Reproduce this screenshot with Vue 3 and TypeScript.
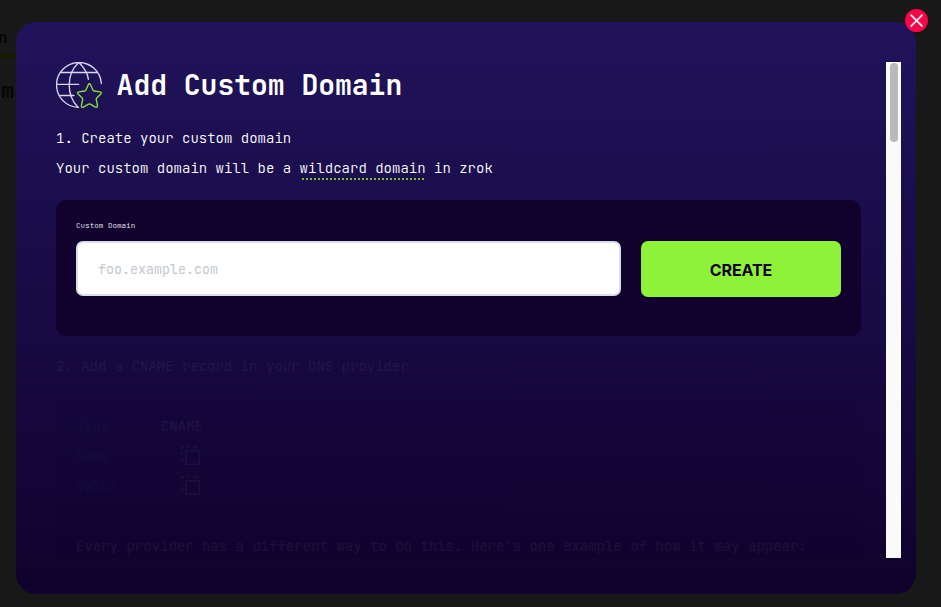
<script setup lang="ts">
interface RecordRow {
  label: string
  value?: string
}

const records: RecordRow[] = [
  { label: 'Type', value: 'CNAME' },
  { label: 'Name' },
  { label: 'Value' },
]
</script>

<template>
  <div class="page">
    <div class="backdrop" aria-hidden="true">
      <div class="tab">n</div>
      <div class="title">ma</div>
    </div>

    <section class="modal">
      <button class="close" aria-label="Close">
        <svg width="23" height="23" viewBox="0 0 23 23">
          <path d="M6.1 6.1 17.1 17.1M17.1 6.1 6.1 17.1" stroke="#fff" stroke-width="1.5" stroke-linecap="round" />
        </svg>
      </button>

      <div class="content">
        <header class="heading">
          <svg class="globe" width="48" height="48" viewBox="0 0 48 48" fill="none">
            <g stroke="#d9d5ee" stroke-width="1.35" stroke-linecap="round">
              <path d="M45.3 21.5A22.4 22.4 0 1 0 22 45.3C16.800 40 13.200 32 13.200 23S16.800 6 22.800.6C28 5.500 31.400 11 32.400 17.300" />
              <path d="M5 10.500H41M.7 22.400H22.500M4.500 33.500H18" />
            </g>
            <path d="M32.300 22.700 Q33.400 20.700 34.500 22.700L37 28.200Q37.300 28.900 38.100 29L44 29.800Q46.300 30.300 44.800 32L40.700 35.900Q40.100 36.500 40.200 37.300L41.500 43.500Q41.500 45.900 39.400 45.100L34.300 42.200Q33.400 41.700 32.600 42.200L27.400 45.100Q25.200 45.900 25.400 43.500L26.700 37.300Q26.800 36.500 26.200 35.900L22.100 32Q20.600 30.300 22.900 29.800L28.700 29Q29.500 28.900 29.800 28.200Z" stroke="#88e436" stroke-width="1.35" stroke-linejoin="round" />
          </svg>
          <h1>Add Custom Domain</h1>
        </header>

        <p>1. Create your custom domain</p>
        <p>Your custom domain will be a <span class="hint">wildcard domain</span> in zrok</p>

        <form class="panel create" @submit.prevent>
          <div class="field">
            <label for="domain">Custom Domain</label>
            <input id="domain" type="text" placeholder="foo.example.com" />
          </div>
          <button class="submit" type="submit">CREATE</button>
        </form>

        <div class="pending">
          <p>2. Add a CNAME record in your DNS provider</p>
          <div class="panel dns">
            <div v-for="row in records" :key="row.label" class="row">
              <span class="key">{{ row.label }}</span>
              <span v-if="row.value">{{ row.value }}</span>
              <svg v-else class="copy" width="22" height="22" viewBox="0 0 22 22" fill="none" stroke="#8ef338" stroke-width="1.5">
                <rect x="5.700" y="5.700" width="13.600" height="13.600" rx="1" />
                <path d="M1.700 4V1.700H4M7 1.700H10M13 1.700H15.700V4M1.700 7V10M1.700 13V15.700H4" />
              </svg>
            </div>
            <p class="note">Every provider has a different way to do this. Here's one example of how it may appear:</p>
          </div>
        </div>
      </div>

      <div class="scrollbar"><div class="thumb"></div></div>
    </section>
  </div>
</template>

<style>
body {
  background: #181818;
}
</style>

<style scoped>
.page {
  position: relative;
  box-sizing: border-box;
  width: 941px;
  height: 607px;
  padding: 22px 25px 13px 16px;
  overflow: hidden;
  background: #181818;
  font: 300 14px/30px "JetBrains Mono", "DejaVu Sans Mono", monospace;
  color: #fff;
}

.backdrop {
  position: absolute;
  top: 0;
  left: 0;
  width: 16px;
  height: 120px;
  color: #050505;
}

.tab {
  height: 54px;
  border-bottom: 4px solid #151b03;
  font-size: 16px;
  font-weight: 700;
  line-height: 75px;
  text-indent: -2px;
}

.title {
  font-size: 22px;
  font-weight: 700;
  line-height: 66px;
  text-indent: 1px;
}

.modal {
  position: relative;
  box-sizing: border-box;
  display: flex;
  justify-content: space-between;
  height: 572px;
  padding: 40px 15px 36px 40px;
  border-radius: 20px;
  background: linear-gradient(#20135b, #10022d);
}

.close {
  position: absolute;
  top: -13px;
  right: -12px;
  width: 23px;
  height: 23px;
  padding: 0;
  border: 0;
  border-radius: 50%;
  background: #f90447;
}

.close svg {
  display: block;
}

.content {
  width: 805px;
  overflow: hidden;
}

.heading {
  display: flex;
  align-items: center;
  gap: 12.6px;
  height: 48px;
  margin-bottom: 13px;
}

h1 {
  margin: 0;
  font-size: 28px;
  line-height: 46px;
  height: 48px;
  font-weight: 600;
}

p {
  margin: 0;
  white-space: nowrap;
}

.hint {
  padding-bottom: 3px;
  background: repeating-linear-gradient(90deg, #79bd31 0 2px, transparent 2px 4px) 2px 100% / 123px 2px no-repeat;
}

.panel {
  box-sizing: border-box;
  border-radius: 10px;
  background: #10022d;
}

.create {
  display: flex;
  gap: 20px;
  height: 136px;
  margin-top: 17px;
  padding: 20px;
}

.field {
  display: flex;
  flex-direction: column;
  width: 545px;
}

label {
  height: 21px;
  font-size: 7.6px;
  font-weight: 300;
  line-height: 10px;
  color: #eceaf1;
}

input {
  box-sizing: border-box;
  width: 545px;
  height: 55px;
  padding: 0 20px;
  border: 2px solid #d9deea;
  border-radius: 7px;
  outline: 0;
  background: #fff;
  font: 13.333px "JetBrains Mono", "DejaVu Sans Mono", monospace;
}

input::placeholder {
  color: #c3c7d0;
}

.submit {
  width: 200px;
  height: 56px;
  margin-top: 21px;
  padding: 2px 0 0;
  border: 0;
  border-radius: 7px;
  background: #8ef338;
  color: #10022b;
  font: 700 16px Inter, sans-serif;
  letter-spacing: -0.12px;
}

.pending {
  margin-top: 15px;
  opacity: 0.05;
}

.dns {
  height: 300px;
  margin-top: 15px;
  padding: 15px 20px;
}

.row {
  display: flex;
  align-items: center;
  height: 30px;
}

.key {
  width: 85px;
  color: #0e88a8;
}

.copy {
  margin-left: 19px;
}

.note {
  margin-top: 30px;
}

.scrollbar {
  box-sizing: border-box;
  width: 15px;
  padding: 1px 3px 0 4px;
  background: #fafafa;
}

.thumb {
  width: 8px;
  height: 79px;
  border-radius: 4px;
  background: #b9b9b9;
}
</style>
